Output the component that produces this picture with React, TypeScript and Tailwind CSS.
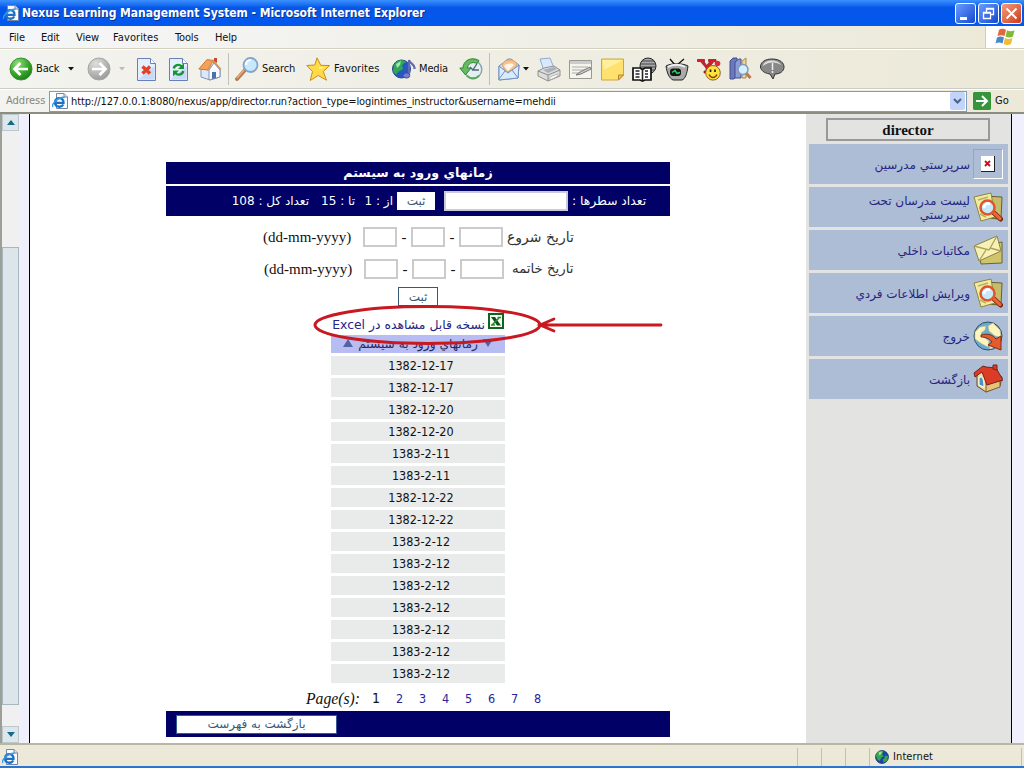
import React from "react";

const ui = "font-['DejaVu_Sans_Condensed','DejaVu_Sans',sans-serif]";
const wide = "font-['DejaVu_Sans',sans-serif]";
const serif = "font-['Liberation_Serif',serif]";

type IconProps = { className?: string };

function IePage({ className = "" }: IconProps) {
  return (
    <svg viewBox="0 0 16 16" className={className}>
      <path d="M4.500 .5h7.500l3.500 3.500v11.500h-11z" fill="#f8fbff" stroke="#7485a8" />
      <path d="M12 .5v3.500h3.500" fill="#d5e0f5" stroke="#7485a8" />
      <path d="M11.300 11.500c-2 3.500-8.300 2.800-8.300-2 0-5.800 9-5.800 8.500.4H4.500" fill="none" stroke="#1b72c4" strokeWidth="2.300" />
      <path d="M.8 14C-1 11 7 3.500 12.500 4.300" fill="none" stroke="#3c9be8" strokeWidth="1.400" />
    </svg>
  );
}

function BackIcon({ gray = false }: { gray?: boolean }) {
  return (
    <svg viewBox="0 0 24 24" className="h-6 w-6 shrink-0">
      <defs>
        <radialGradient id={gray ? "ballGray" : "ballGreen"} cx=".35" cy=".25" r=".8">
          <stop offset="0" stopColor={gray ? "#dedede" : "#8fdc7a"} />
          <stop offset=".6" stopColor={gray ? "#b5b5b3" : "#37a82b"} />
          <stop offset="1" stopColor={gray ? "#999" : "#1d7d18"} />
        </radialGradient>
      </defs>
      <circle cx="12" cy="12" r="11" fill={gray ? "url(#ballGray)" : "url(#ballGreen)"} stroke={gray ? "#a5a5a2" : "#3b8e35"} />
      <path d={gray ? "M5 12h13M12.500 6l6 6-6 6" : "M19 12H6M11.500 6l-6 6 6 6"} fill="none" stroke="#fff" strokeWidth="2.700" />
    </svg>
  );
}

function PageIcon({ refresh = false }: { refresh?: boolean }) {
  return (
    <svg viewBox="0 0 19 23" className="h-[23px] w-[19px] shrink-0">
      <path d="M.5 .5h13l5 5v17H.5z" fill="#e5efff" stroke="#6680bb" />
      <path d="M1.500 21.500L17.500 8v13.500z" fill="#c7dafa" />
      <path d="M13.500 .5v5h5" fill="#fff" stroke="#6680bb" />
      {refresh ? (
        <g fill="none" stroke="#189432" strokeWidth="2.400">
          <path d="M4.800 10.500c.5-3.500 5-5 8-2M14.200 13c-.5 3.500-5 5-8 2" />
          <path d="M15 5v6H9zM4 18.500v-6h6z" fill="#189432" stroke="none" />
        </g>
      ) : (
        <path d="M5.500 8.500l7.500 7M13 8.500l-7.500 7" stroke="#e34222" strokeWidth="3.400" />
      )}
    </svg>
  );
}

function HomeIcon() {
  return (
    <svg viewBox="0 0 24 24" className="h-6 w-6 shrink-0">
      <path d="M3 12l7-6 4-2 8 9v7l-10 3-9-3z" fill="#dce8fa" stroke="#8193b8" />
      <path d="M11 13l5-7 6 7v7l-11 3z" fill="#fafcff" stroke="#8193b8" />
      <path d="M.8 12L9 2.500l6 1L10 13z" fill="#f3a257" stroke="#cb7a35" />
      <path d="M9.500 13.500L15 3.500l8 9" fill="none" stroke="#d99052" strokeWidth="1.500" />
      <path d="M16 1h3v5l-3-2z" fill="#c54b2c" />
      <path d="M14 15h4v6l-4 1z" fill="#4a70af" />
    </svg>
  );
}

function SearchIcon() {
  return (
    <svg viewBox="0 0 24 24" className="h-6 w-6 shrink-0">
      <path d="M2 22l8-9" stroke="#b9794f" strokeWidth="3.800" strokeLinecap="round" />
      <path d="M2 21l7-8" stroke="#e9ad84" strokeWidth="1.500" />
      <circle cx="15.500" cy="8" r="7" fill="#c8e9fd" stroke="#82a5cf" strokeWidth="1.800" />
      <path d="M11 8c0-3 2-5 5-5" stroke="#fff" strokeWidth="2" fill="none" />
    </svg>
  );
}

function StarIcon() {
  return (
    <svg viewBox="0 0 24 24" className="h-6 w-6 shrink-0">
      <path d="M11 .8l3.800 7.500 8.700.2-6.200 6 3.200 8.700-8.300-4.700-8 5 2.300-9L.8 8.500l8-.5z" fill="#ffdc45" stroke="#c88d20" strokeLinejoin="round" />
      <path d="M11.500 4l2 6 6 .5-6 1.500z" fill="#fff59b" />
    </svg>
  );
}

function Globe({ className = "" }: IconProps) {
  return (
    <svg viewBox="0 0 18 18" className={className}>
      <circle cx="9" cy="9" r="8.300" fill="#1947a5" stroke="#123270" />
      <path d="M3 3c3-3 7-2 8-1L9 5l2 3-3 2-2 4-3-2-2-5zM13 7l4 1-2 6-4 2-1-4 2-1z" fill="#38a747" />
      <path d="M5 3l4-1-1 3-3 2z" fill="#9be39c" />
    </svg>
  );
}

function MediaIcon() {
  return (
    <svg viewBox="0 0 24 22" className="h-[22px] w-6 shrink-0">
      <circle cx="9.500" cy="11" r="9" fill="#2459c0" stroke="#24458a" />
      <path d="M2 7c3-6 9-6 12-3l-4 3 1 4-5 3-2 3-3-4z" fill="#31a653" />
      <path d="M4 6l5-3-1 4-3 3z" fill="#a5e7ad" />
      <path d="M17 17V2c1 4 6 4 5.500 9" fill="none" stroke="#6367b8" strokeWidth="2.200" />
      <ellipse cx="14.500" cy="17.500" rx="3.300" ry="2.600" fill="#7b80cc" stroke="#464e9c" />
    </svg>
  );
}

function HistoryIcon() {
  return (
    <svg viewBox="0 0 24 24" className="h-6 w-6 shrink-0">
      <circle cx="14" cy="12.500" r="8.800" fill="#e4f0f0" stroke="#8ba4af" strokeWidth="1.500" />
      <path d="M20 3.500C12-1 4 4 4 11H.8l5.700 7 5.500-7H8.500c0-4 4.500-7 9.500-4.500z" fill="#66bc5d" stroke="#2e8532" />
      <path d="M18 6.500l-4 6.500h6M14 13l-3-3" stroke="#4f6878" strokeWidth="1.400" fill="none" />
      <path d="M8 18.500c3 4 9 4 12 0" stroke="#57a75a" strokeWidth="2" fill="none" />
    </svg>
  );
}

function MailIcon() {
  return (
    <svg viewBox="0 0 22 24" className="h-6 w-[22px] shrink-0">
      <path d="M1 9l9-7h3l8 6-1 13-19 2z" fill="#cfe4fb" stroke="#718fbd" />
      <path d="M4 8c2-6 12-7 15-1l-2 6-9 2z" fill="#f5c28e" stroke="#e1a36b" />
      <path d="M6 9c3-3 8-3 10-1l-6 6z" fill="#fff6e8" />
      <path d="M1 9l9 7 11-8-1 13-19 2zM1 22l6-8M20 21l-6-8" fill="#d8eafd" stroke="#718fbd" />
    </svg>
  );
}

function PrintIcon() {
  return (
    <svg viewBox="0 0 24 25" className="h-[25px] w-6 shrink-0">
      <path d="M3 2l10-1 4 10-10 3z" fill="#d8e9fd" stroke="#8fabce" />
      <path d="M1 14l6-3 10-2 6 4v6l-12 5-10-5z" fill="#ddd" stroke="#909090" />
      <path d="M1 14l10 4 12-5M11 18v6" fill="none" stroke="#8b8b8b" />
      <path d="M6 13l11-3 3 2-9 4z" fill="#aab0b9" />
      <path d="M13 20l8-3v2l-8 4z" fill="#fff" stroke="#888" strokeWidth=".5" />
    </svg>
  );
}

function EditIcon() {
  return (
    <svg viewBox="0 0 24 21" className="h-[21px] w-6 shrink-0">
      <path d="M.5 1.500h22v18H.5z" fill="#f5f5ed" stroke="#999991" />
      <path d="M1 2h21v3H1z" fill="#ccc" />
      <path d="M3 8h16M3 11h13M3 14h8" stroke="#aaa" />
      <path d="M7 16l5-1 10-5-1-2-10 5z" fill="#ccc" stroke="#777" />
    </svg>
  );
}

function NoteIcon() {
  return (
    <svg viewBox="0 0 23 23" className="h-[23px] w-[23px] shrink-0">
      <path d="M.5 1h22v16l-5 5H.5z" fill="#ffe16f" stroke="#d3a53d" />
      <path d="M1.500 2h20L3 12z" fill="#fff0a0" />
      <path d="M17.500 22v-5h5z" fill="#f5bd43" stroke="#b9862e" />
    </svg>
  );
}

function BookIcon() {
  return (
    <svg viewBox="0 0 25 25" className="h-[25px] w-[25px] shrink-0">
      <circle cx="16" cy="9" r="8" fill="#aaa" stroke="#222" />
      <path d="M10 4h12M8 7h16M8 10h16M9 13h14" stroke="#444" />
      <path d="M1 11h7l2.500 1.500L13 11h6v12h-6l-2.500 1L8 23H1z" fill="#fff" stroke="#111" strokeWidth="1.700" />
      <path d="M10.500 12v12M3.500 14h4M3.500 17h4M3.500 20h4M13 14h3M13 17h3M13 20h3" stroke="#222" strokeWidth="1.600" />
    </svg>
  );
}

function TvIcon() {
  return (
    <svg viewBox="0 0 24 23" className="h-[23px] w-6 shrink-0">
      <path d="M5 1l5 6M19 1l-7 6" stroke="#111" strokeWidth="1.300" />
      <path d="M1 8c5-3 17-3 22 0-1 8-3 13-6 14H8C4 20 2 15 1 8z" fill="#aaa" stroke="#222" />
      <path d="M3 9c5-3 12-3 17 0" stroke="#eee" strokeWidth="2" fill="none" />
      <rect x="5" y="10.500" width="11" height="7.500" rx="3" fill="#151515" />
      <path d="M7 14.500l3-2 2 3 3-1" stroke="#25d75a" strokeWidth="1.400" fill="none" />
    </svg>
  );
}

function MessengerIcon() {
  return (
    <svg viewBox="0 0 24 23" className="h-[23px] w-6 shrink-0">
      <path d="M.5 1.500h7v2H7l2.500 4L13 3.500h-1.500v-2H19v2h-2l-5.500 6.500v3h2v2H7v-2h2v-3L3.500 3.500h-3z" fill="#d51c2b" stroke="#791522" strokeWidth=".7" />
      <circle cx="20.500" cy="5.500" r="2.800" fill="#e62936" />
      <circle cx="16" cy="14.800" r="7.300" fill="#ffe23c" stroke="#8c6524" />
      <path d="M13.500 11.500v2.500M18 11.500v2.500" stroke="#222" strokeWidth="1.700" />
      <path d="M12 16.500c2 4 6 4 8 0" fill="none" stroke="#8b3a12" strokeWidth="1.500" />
    </svg>
  );
}

function ResearchIcon() {
  return (
    <svg viewBox="0 0 23 24" className="h-6 w-[23px] shrink-0">
      <path d="M1 4l3-3h4v18l-3 3H1z" fill="#6c78bd" stroke="#454f90" />
      <path d="M6 5l4-3h2v19H6z" fill="#8d9bd6" stroke="#454f90" />
      <path d="M13 4l4-3v20h-4z" fill="#ecd598" stroke="#a68955" />
      <path d="M17 16l4.500 5" stroke="#bd784c" strokeWidth="3" />
      <circle cx="14" cy="12.500" r="5" fill="#d4effd" stroke="#7d9bbc" strokeWidth="1.500" />
    </svg>
  );
}

function BubbleIcon() {
  return (
    <svg viewBox="0 0 25 22" className="h-[22px] w-[25px] shrink-0">
      <path d="M12 1c16 0 15 15 3 15l-2 5-3-5C-4 14-2 1 12 1z" fill="#888" stroke="#333" />
      <path d="M3 8c1-7 15-7 18-1-4-3-12-4-18 1z" fill="#ddd" />
      <path d="M12.500 5v7M12.500 13v2" stroke="#eee" strokeWidth="1.500" />
    </svg>
  );
}

function WindowsFlag() {
  return (
    <svg viewBox="0 0 20 18" className="h-[18px] w-5">
      <path d="M4 2c3-2 5-1 7 0L9.500 8C7 7 5 7 2.500 8z" fill="#e5653c" />
      <path d="M12 2.300c3 1.500 5 1 7.500 0L18 8.500c-3 1.500-5 1-7.500 0z" fill="#80b936" />
      <path d="M2 9.500c3-1.500 5-1 7 0L7.500 15.500c-3-1.500-5-1-7 0z" fill="#4688cf" />
      <path d="M10 10c3 1.500 5 1 7.500 0L16 16c-3 1.500-5 1-7.500 0z" fill="#f4bb32" />
    </svg>
  );
}

function DocsIcon() {
  return (
    <svg viewBox="0 0 30 30" className="h-[30px] w-[30px] shrink-0">
      <path d="M11 4l18 1-1 22-17-1z" fill="#c5bd6b" stroke="#655f2d" />
      <path d="M1 5l17-4 4 24-14 4z" fill="#f2eca2" stroke="#8e853f" />
      <path d="M5 8l10-3M7 22l6 3" stroke="#bbae5e" strokeWidth="1.500" />
      <path d="M21 21l6.500 6" stroke="#70230e" strokeWidth="5" strokeLinecap="round" />
      <path d="M20 20l7 6.500" stroke="#ee6337" strokeWidth="3.400" strokeLinecap="round" />
      <circle cx="14.500" cy="15.500" r="7" fill="#c5e9fb" stroke="#df5429" strokeWidth="2.500" />
      <path d="M11 16c0-4 3-5 6-4" fill="none" stroke="#fff" strokeWidth="2.500" />
    </svg>
  );
}

function LetterIcon() {
  return (
    <svg viewBox="0 0 30 30" className="h-[30px] w-[30px] shrink-0">
      <path d="M5 12l24-5v21L8 29z" fill="#cfc46c" stroke="#6b6431" />
      <path d="M1 11L24 1l4 15L6 26z" fill="#f8f1b4" stroke="#8b8344" />
      <path d="M1 11l15 4L24 1M6 26l7-11M28 16l-11-3" fill="none" stroke="#aaa15d" strokeWidth="1.300" />
    </svg>
  );
}

function ExitIcon() {
  return (
    <svg viewBox="0 0 30 30" className="h-[30px] w-[30px] shrink-0">
      <circle cx="15" cy="15" r="14" fill="#67abd7" stroke="#304e67" />
      <path d="M2 11l5-5 6-1-1 4-4 3 1 3 7 5-1 6-6-3-7-5zM15 5l5-3 7 7 1 7-6-1-6-5zM16 23l5-2 1 5-5 2z" fill="#fff4bb" stroke="#c2b879" strokeWidth=".6" />
      <path d="M8 14c7-2 12 0 15 4l5-3v14l-13-5 4-3c-3-4-7-5-11-5z" fill="#e65a2d" stroke="#7b2d18" />
    </svg>
  );
}

function HouseIcon() {
  return (
    <svg viewBox="0 0 30 30" className="h-[30px] w-[30px] shrink-0">
      <path d="M4 10l8-6 17 9-2 9-14 6-9-6z" fill="#f5dc94" stroke="#584929" />
      <path d="M13 18l14-3v8l-14 5z" fill="#e9c279" stroke="#765d38" />
      <path d="M1 9L10 2l3 1 10 1 7 12-16 5L9 8l-7 5z" fill="#dc3c26" stroke="#72251b" />
      <path d="M6 14c3-3 5 1 5 9l-5-2z" fill="#4d91c8" stroke="#fff" />
      <path d="M20 1h4v5l-4-1z" fill="#db3d26" stroke="#72251b" />
    </svg>
  );
}

function MissingIcon() {
  return (
    <div className="flex h-[30px] w-[30px] shrink-0 items-center justify-center border border-t-[#98a6bd] border-l-[#98a6bd] border-r-white border-b-white">
      <svg viewBox="0 0 14 16" className="h-4 w-[14px]">
        <path d="M0 0h14v16H0z" fill="#222" />
        <path d="M0 0h13v15H0z" fill="#fff" />
        <path d="M4 5l5 5M9 5l-5 5" stroke="#cb1022" strokeWidth="1.900" />
      </svg>
    </div>
  );
}

function Caret({ className = "" }: IconProps) {
  return (
    <svg viewBox="0 0 6 4" className={"h-1 w-1.5 shrink-0 " + className}>
      <path d="M0 0h6L3 3.500z" fill="currentColor" />
    </svg>
  );
}

function TitleBar() {
  const base = "flex h-[21px] w-[21px] items-center justify-center rounded-[3px] border border-white";
  return (
    <header className="flex h-[26px] shrink-0 items-center bg-linear-to-b from-[#3b91ff] via-[#0556e8] via-30% to-[#0258ee] pl-[3px] pr-[2px]">
      <IePage className="h-4 w-4" />
      <h1 className="ml-[3px] w-[420px] whitespace-nowrap text-[12px] font-bold tracking-[-0.03px] text-white [text-shadow:1px_1px_#0a318d]">Nexus Learning Management System - Microsoft Internet Explorer</h1>
      <div className="ml-auto flex gap-[2px]">
        <div className={base + " bg-linear-to-br from-[#6b9cff] to-[#1745ce]"}><svg viewBox="0 0 19 19" className="h-[19px] w-[19px]"><path d="M4 13h7v3H4z" fill="#fff" /></svg></div>
        <div className={base + " bg-linear-to-br from-[#6b9cff] to-[#1745ce]"}><svg viewBox="0 0 19 19" className="h-[19px] w-[19px]"><path d="M7.500 8V4.500h7v6H12M4.500 8.500h7v6h-7zM7 5h8M4 9h8" fill="none" stroke="#fff" strokeWidth="1.300" /></svg></div>
        <div className={base + " bg-linear-to-br from-[#f39b7d] to-[#ca3714]"}><svg viewBox="0 0 19 19" className="h-[19px] w-[19px]"><path d="M4.500 4.500l10 10M14.500 4.500l-10 10" stroke="#fff" strokeWidth="2" /></svg></div>
      </div>
    </header>
  );
}

function MenuBar() {
  return (
    <nav className="flex h-[23px] shrink-0 items-center border-b border-[#d4d0c0] bg-linear-to-r from-[#f5f6f8] to-[#ece9d8] pl-[9px] text-[11px] tracking-[-0.15px]">
      <div className="flex pt-[2px]">
        <span className="w-8">File</span>
        <span className="w-[35px]">Edit</span>
        <span className="w-[37px]">View</span>
        <span className="w-[62px] tracking-[0.1px]">Favorites</span>
        <span className="w-10">Tools</span>
        <span>Help</span>
      </div>
      <div className="ml-auto flex h-[22px] w-[39px] items-center justify-center border-l border-[#d0ccbc] bg-white"><WindowsFlag /></div>
    </nav>
  );
}

function ToolBar() {
  return (
    <div className="flex h-10 shrink-0 items-center border-t border-b border-t-white border-b-[#c9ccc8] bg-linear-to-r from-[#f3f3ef] to-[#ece9d8] pl-[9px] text-[11px] tracking-[-0.15px]">
      <BackIcon />
      <span className="ml-[3px] w-[30px]">Back</span>
      <Caret className="ml-[2px]" />
      <span className="ml-[13px] flex"><BackIcon gray /></span>
      <Caret className="ml-2 text-[#bbb]" />
      <span className="ml-[12px] flex gap-[13px]"><PageIcon /><PageIcon refresh /></span>
      <span className="ml-[10px] flex"><HomeIcon /></span>
      <div className="mx-[6px] h-8 w-px bg-[#bfc0b8]" />
      <SearchIcon />
      <span className="ml-[3px] w-11">Search</span>
      <StarIcon />
      <span className="ml-[4px] w-[58px] tracking-[0.1px]">Favorites</span>
      <MediaIcon />
      <span className="ml-[3px] w-10">Media</span>
      <HistoryIcon />
      <div className="ml-[6px] mr-[8px] h-8 w-px bg-[#bfc0b8]" />
      <MailIcon />
      <Caret className="ml-[3px] mr-[8px]" />
      <div className="flex items-center gap-[8px]">
        <PrintIcon /><EditIcon /><NoteIcon /><BookIcon /><TvIcon /><MessengerIcon /><ResearchIcon /><BubbleIcon />
      </div>
    </div>
  );
}

function AddressBar() {
  return (
    <div className="flex h-[25px] shrink-0 items-center border-t border-b-2 border-t-white border-b-[#8c8d7f] bg-linear-to-r from-[#f3f3ef] to-[#ece9d8] pl-[6px] text-[11px]">
      <span className="w-[43px] text-[#85867c]">Address</span>
      <div className="flex h-[21px] w-[918px] items-center border border-[#7f9db9] bg-white pl-[2px]">
        <IePage className="h-4 w-4" />
        <span className="ml-[3px] mt-[2px] whitespace-nowrap tracking-[-0.12px]">http://127.0.0.1:8080/nexus/app/director.run?action_type=logintimes_instructor&amp;username=mehdii</span>
        <div className="ml-auto mr-px flex h-[18px] w-[15px] items-center justify-center rounded-xs bg-[#c3d4fa]"><svg viewBox="0 0 9 6" className="h-1.5 w-[9px]"><path d="M1 1l3.500 3.500L8 1" fill="none" stroke="#4d6185" strokeWidth="2" /></svg></div>
      </div>
      <svg viewBox="0 0 18 18" className="ml-[6px] h-[18px] w-[18px]"><path d="M1 0h16l1 1v16l-1 1H1l-1-1V1z" fill="#36953a" /><path d="M3 9h11M9 4l5 5-5 5" fill="none" stroke="#fff" strokeWidth="2" /></svg>
      <span className="ml-[4px]">Go</span>
    </div>
  );
}

function ScrollBar() {
  return (
    <div className="flex w-5 shrink-0 flex-col border-l-2 border-[#9d9e98] bg-[#eff0ef] pr-px">
      <div className="flex h-[17px] w-[17px] items-center justify-center border border-[#bdc8ce] bg-[#dce7eb]"><svg viewBox="0 0 8 5" className="h-[5px] w-2"><path d="M0 5h8L4 0z" fill="#16688d" /></svg></div>
      <div className="mt-[116px] h-[458px] w-[17px] border border-[#a7b7c0] bg-[#dce5e9]" />
      <div className="mt-auto flex h-[17px] w-[17px] items-center justify-center border border-[#bdc8ce] bg-[#dce7eb]"><svg viewBox="0 0 8 5" className="h-[5px] w-2"><path d="M0 0h8L4 5z" fill="#16688d" /></svg></div>
    </div>
  );
}

function DateRow({ label, className, labelClass }: { label: string; className: string; labelClass: string }) {
  return (
    <div className={"flex h-5 items-center whitespace-nowrap " + className}>
      <span className={serif + " w-[100px] pt-px text-[15px]"}>(dd-mm-yyyy)</span>
      <div className="h-5 w-[34px] border-2 border-[#cbcbcb]" />
      <span className={serif + " w-[14px] text-center text-[15px]"}>-</span>
      <div className="h-5 w-[34px] border-2 border-[#cbcbcb]" />
      <span className={serif + " w-[14px] text-center text-[15px]"}>-</span>
      <div className="h-5 w-11 border-2 border-[#cbcbcb]" />
      <span dir="rtl" className={wide + " text-[#333] " + labelClass}>{label}</span>
    </div>
  );
}

const dates = ["1382-12-17", "1382-12-17", "1382-12-20", "1382-12-20", "1383-2-11", "1383-2-11", "1382-12-22", "1382-12-22", "1383-2-12", "1383-2-12", "1383-2-12", "1383-2-12", "1383-2-12", "1383-2-12", "1383-2-12"];

function Report() {
  return (
    <main className="relative w-[776px] shrink-0 bg-white pl-[136px] pt-12">
      <div className="w-[504px]">
        <h2 dir="rtl" className={wide + " flex h-[22px] items-center justify-center bg-[#000066] text-[12.6px] font-bold text-white"}>زمانهاي ورود به سيستم</h2>
        <div className={wide + " mt-[2px] flex h-[30px] items-center whitespace-nowrap bg-[#000066] pl-[66px] text-[12px] text-white"}>
          <span dir="rtl" className="w-[77px] text-right">تعداد كل : 108</span>
          <span dir="rtl" className="ml-[12px] w-[34px] text-right">تا : 15</span>
          <span dir="rtl" className="ml-[11px] w-[27px] text-right">از : 1</span>
          <span className="ml-[4px] flex h-[18px] w-[38px] items-center justify-center bg-white text-[#395b79]">ثبت</span>
          <div className="ml-[9px] h-5 w-[124px] border-2 border-[#cacada] bg-white" />
          <span dir="rtl" className="ml-[4px] text-[12.3px]">تعداد سطرها :</span>
        </div>
        <DateRow className="ml-[97px] mt-[11px]" label="تاريخ شروع" labelClass="ml-[4px] text-[14px]" />
        <DateRow className="ml-[98px] mt-3" label="تاريخ خاتمه" labelClass="ml-[8px] text-[13.3px]" />
        <div className={wide + " ml-[232px] mt-2 flex h-[19px] w-10 items-center justify-center border border-[#385875] text-[12px] text-[#395b79]"}>ثبت</div>
        <div className="ml-[165px] w-[174px]">
          <div dir="rtl" className={wide + " mt-[6px] flex h-[23px] items-start whitespace-nowrap pr-px text-[12.400px] text-[#252585]"}>
            <svg viewBox="0 0 16 16" className="mt-px h-4 w-4 shrink-0"><path d="M1 1h14v14H1z" fill="#f5fff5" stroke="#11651b" strokeWidth="2" /><path d="M3 4h4l6 8.500H9z" fill="#0d4f15" /><path d="M11.500 4.500L4 12M9.500 4.500h3.500M3 12h4" stroke="#2a8a34" strokeWidth="1.500" /></svg>
            <span className="mr-[3px] mt-[4px] leading-[18px]">نسخه قابل مشاهده در Excel</span>
          </div>
          <div dir="rtl" className={wide + " flex h-[18px] items-center justify-center gap-[5px] whitespace-nowrap bg-[#b7bdf2] text-[12.200px] text-[#292958]"}>
            <svg viewBox="0 0 10 8" className="mb-[3px] h-2 w-2.5"><path d="M0 0h10L5 8z" fill="#5561a3" /></svg>
            <span>زمانهاي ورود به سيستم</span>
            <svg viewBox="0 0 10 8" className="mb-[3px] h-2 w-2.5"><path d="M0 8h10L5 0z" fill="#5561a3" /></svg>
          </div>
          <div className="mt-[3px] flex flex-col gap-[3px]">
            {dates.map((d, i) => <div key={i} className="flex h-[19px] items-center justify-center bg-[#e9eaea] pl-[6px] text-[12.5px] leading-[19px]">{d}</div>)}
          </div>
        </div>
        <div className="ml-[140px] mt-[3px] flex h-[25px] items-center">
          <span className={serif + " w-[66px] text-[15.700px] italic"}>Page(s):</span>
          <span className="w-[24px] text-[14px]">1</span>
          {["2", "3", "4", "5", "6", "7", "8"].map((p) => <span key={p} className="w-[23px] pt-[2px] text-[12.5px] text-[#26259a]">{p}</span>)}
        </div>
        <div className="flex h-[26px] items-center bg-[#000066] pl-[10px]">
          <span dir="rtl" className={wide + " flex h-[19px] w-[161px] items-center justify-center border border-[#315c91] bg-white text-[12px] text-[#395b79]"}>بازگشت به فهرست</span>
        </div>
      </div>
      <svg viewBox="0 0 360 44" className="pointer-events-none absolute left-[280px] top-[189px] h-11 w-[360px]">
        <ellipse cx="117.500" cy="22" rx="112.500" ry="18.500" fill="none" stroke="#c81921" strokeWidth="3" />
        <path d="M232 22h119M244 16l-14 6 14 6" fill="none" stroke="#c81921" strokeWidth="2.800" strokeLinecap="round" />
      </svg>
    </main>
  );
}

function SideBar() {
  const items = [
    { label: "سرپرستي مدرسين", icon: <MissingIcon /> },
    { label: "ليست مدرسان تحت سرپرستي", icon: <DocsIcon /> },
    { label: "مكاتبات داخلي", icon: <LetterIcon /> },
    { label: "ويرايش اطلاعات فردي", icon: <DocsIcon /> },
    { label: "خروج", icon: <ExitIcon /> },
    { label: "بازگشت", icon: <HouseIcon /> },
  ];
  return (
    <aside className="w-[206px] shrink-0 border-r border-black bg-[#e3e3e2] pl-[3px] pt-1">
      <div className={serif + " ml-[17px] flex h-[23px] w-[164px] items-center justify-center border-2 border-[#999] pt-px text-[15px] font-bold"}>director</div>
      <div className="mt-[3px] flex w-[199px] flex-col gap-[3px]">
        {items.map((item) => (
          <div key={item.label} dir="rtl" className="flex h-10 items-center bg-[#adbdd6] pr-[5px]">
            {item.icon}
            <span className={wide + " mr-[3px] w-[120px] pt-[2px] text-[12px] leading-[14px] text-[#252581]"}>{item.label}</span>
          </div>
        ))}
      </div>
    </aside>
  );
}

function StatusBar() {
  return (
    <footer className="flex h-[25px] shrink-0 items-center border-b-2 border-t-2 border-b-[#2c74cf] border-t-[#b9b6a5] bg-[#ece9d8] pl-[2px] pt-[3px] text-[11px]">
      <IePage className="h-4 w-4" />
      <div className="ml-[779px] flex h-[18px] w-[72px]">
        <span className="w-6 border-l border-[#c4c0af]" /><span className="w-6 border-l border-[#c4c0af]" /><span className="w-6 border-l border-[#c4c0af]" />
      </div>
      <div className="flex h-[18px] w-[153px] items-center border-l border-r border-[#c4c0af] pl-[5px]">
        <Globe className="h-[14px] w-[14px]" /><span className="ml-[4px] pt-px tracking-[0.1px]">Internet</span>
      </div>
    </footer>
  );
}

export default function App() {
  return (
    <div className={ui + " flex h-[768px] w-[1024px] flex-col overflow-hidden bg-white text-[#111]"}>
      <TitleBar />
      <MenuBar />
      <ToolBar />
      <AddressBar />
      <div className="flex min-h-0 flex-1 overflow-hidden">
        <ScrollBar />
        <div className="w-[10px] shrink-0 border-r border-black bg-[#f0f0fc]" />
        <Report />
        <SideBar />
        <div className="w-3 shrink-0 bg-[#f0f0fc]" />
      </div>
      <StatusBar />
    </div>
  );
}
